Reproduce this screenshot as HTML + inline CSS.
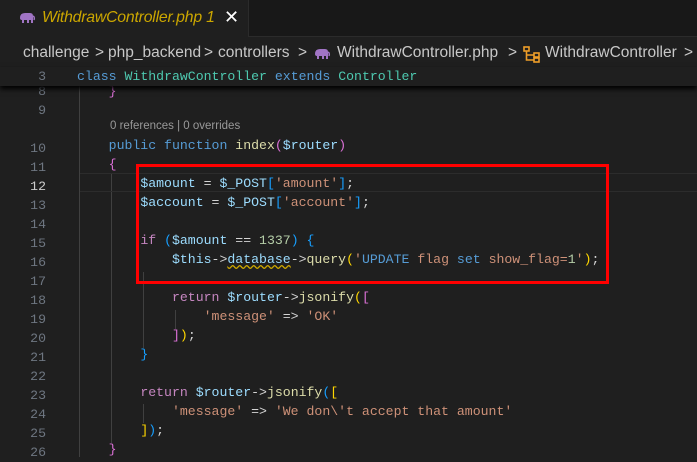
<!DOCTYPE html>
<html><head><meta charset="utf-8"><style>
body{margin:0;width:697px;height:457px;background:#1f1f1f;overflow:hidden;position:relative;font-family:"Liberation Sans",sans-serif}
.tabs{position:absolute;left:0;top:0;width:697px;height:36px;background:#181818;border-bottom:1px solid #2b2b2b}
.tab{position:absolute;left:0;top:0;width:248px;height:37px;background:#1f1f1f;border-right:1px solid #2b2b2b}
.tab .t{position:absolute;left:42px;top:9px;font-size:15.8px;font-style:italic;color:#cca700;letter-spacing:-0.2px}
.tab .x{position:absolute;left:224px;top:7px;font-size:18px;color:#fff}
.bc{position:absolute;top:44px;font-size:15.5px;color:#c8c8c8;white-space:pre}
.gut{position:absolute;left:0;width:46px;text-align:right;font-family:"Liberation Mono",monospace;font-size:13.2px;color:#6e7681;line-height:19px}
.code{position:absolute;left:77px;font-family:"Liberation Mono",monospace;font-size:13.2px;line-height:19px;white-space:pre;color:#d4d4d4}
.k{color:#569cd6}.c{color:#4ec9b0}.v{color:#9cdcfe}.s{color:#ce9178}.n{color:#b5cea8}.f{color:#dcdcaa}.p{color:#c586c0}
.g{color:#ffd700}.o{color:#da70d6}.b{color:#179fff}
.sticky{position:absolute;left:0;top:67px;width:697px;height:19px;background:#1f1f1f;box-shadow:0 3px 5px #000;z-index:2}
.guide{position:absolute;width:1px;background:#404040}
</style></head><body>
<svg width="0" height="0" style="position:absolute"><defs><g id="el"><path d="M2 7 Q2 2 7 2 L12 2 Q15 2 15 5 L15 12 L13 12 L13 9 L11 9 L11 12 L9 12 L9 9 L6 9 L6 12 L4 12 L4 9 Q2 9 2 7Z" fill="#a074c4"/><path d="M15 5 Q17 6 16 9" stroke="#a074c4" stroke-width="1.5" fill="none"/></g></defs></svg>
<div class="tabs"><div class="tab"><svg style="position:absolute;left:18px;top:11px" width="18" height="14"><use href="#el"/></svg><span class="t">WithdrawController.php 1</span><span class="x">✕</span></div></div>
<span class="bc" style="left:23px">challenge</span><span class="bc" style="left:95px">&gt;</span>
<span class="bc" style="left:108px">php_backend</span><span class="bc" style="left:204px">&gt;</span>
<span class="bc" style="left:218px">controllers</span><span class="bc" style="left:298px">&gt;</span>
<svg style="position:absolute;left:313px;top:47px" width="18" height="14"><use href="#el"/></svg>
<span class="bc" style="left:337px">WithdrawController.php</span><span class="bc" style="left:508px">&gt;</span>
<svg style="position:absolute;left:523px;top:45px" width="18" height="18" fill="none" stroke="#ee9d28" stroke-width="1.6"><rect x="1" y="2" width="5" height="4"/><rect x="11" y="8" width="5" height="4"/><rect x="11" y="13" width="5" height="4"/><path d="M3.5 6 V15 H11 M3.5 10 H11"/></svg>
<span class="bc" style="left:545px">WithdrawController</span><span class="bc" style="left:684px">&gt;</span>
<div class="sticky"><div class="gut" style="top:0">3</div><div class="code" style="top:0;left:77px"><span class="k">class</span> <span class="c">WithdrawController</span> <span class="k">extends</span> <span class="c">Controller</span></div></div>
<div class="guide" style="left:79px;top:86px;height:371px"></div>
<div class="guide" style="left:111px;top:173px;height:270px"></div>
<div class="guide" style="left:143px;top:272px;height:76px"></div>
<div class="guide" style="left:143px;top:404px;height:19px"></div>
<div class="guide" style="left:175px;top:310px;height:19px"></div>
<div style="position:absolute;left:80px;top:173px;width:617px;height:19px;border-top:1px solid #2c2c2c;border-bottom:1px solid #2c2c2c;box-sizing:border-box"></div>
<div class="gut" style="top:82px;height:19px;overflow:hidden">8</div>
<div class="gut" style="top:101px">9<br><br>10<br>11<br><span style="color:#ccc">12</span><br>13<br>14<br>15<br>16<br>17<br>18<br>19<br>20<br>21<br>22<br>23<br>24<br>25<br>26</div>
<div class="code" style="top:82px">    <span class="o">}</span></div>
<div style="position:absolute;left:110px;top:120px;font-size:11.5px;color:#999">0 references | 0 overrides</div>
<div class="code" style="top:136px">    <span class="k">public function</span> <span class="f">index</span><span class="o">(</span><span class="v">$router</span><span class="o">)</span>
    <span class="o">{</span>
        <span class="v">$amount</span> = <span class="v">$_POST</span><span class="b">[</span><span class="s">'amount'</span><span class="b">]</span>;
        <span class="v">$account</span> = <span class="v">$_POST</span><span class="b">[</span><span class="s">'account'</span><span class="b">]</span>;

        <span class="p">if</span> <span class="b">(</span><span class="v">$amount</span> == <span class="n">1337</span><span class="b">)</span> <span class="b">{</span>
            <span class="v">$this</span>-&gt;<span class="v" style="text-decoration:underline wavy #cca700">database</span>-&gt;<span class="f">query</span><span class="g">(</span><span class="s">'<span class="k">UPDATE</span> flag <span class="k">set</span> show_flag=<span class="n">1</span>'</span><span class="g">)</span>;

            <span class="p">return</span> <span class="v">$router</span>-&gt;<span class="f">jsonify</span><span class="g">(</span><span class="o">[</span>
                <span class="s">'message'</span> =&gt; <span class="s">'OK'</span>
            <span class="o">]</span><span class="g">)</span>;
        <span class="b">}</span>

        <span class="p">return</span> <span class="v">$router</span>-&gt;<span class="f">jsonify</span><span class="b">(</span><span class="g">[</span>
            <span class="s">'message'</span> =&gt; <span class="s">'We don\'t accept that amount'</span>
        <span class="g">]</span><span class="b">)</span>;
    <span class="o">}</span></div>
<div style="position:absolute;left:136px;top:164px;width:467px;height:114px;border:3px solid #ff0000"></div>
</body></html>
